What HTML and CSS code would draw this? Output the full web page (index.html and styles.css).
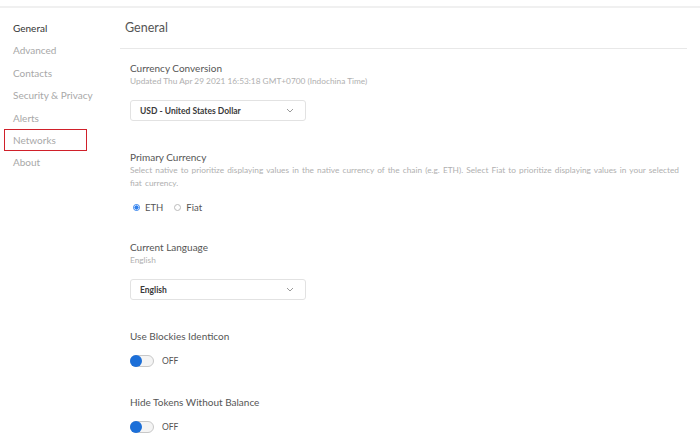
FILE: index.html
```html
<!DOCTYPE html>
<html>
<head>
<meta charset="utf-8">
<link rel="stylesheet" href="styles.css">
</head>
<body>
<div class="topbar"></div>
<div class="page">
  <nav class="sidebar">
    <div class="nav-item active">General</div>
    <div class="nav-item">Advanced</div>
    <div class="nav-item">Contacts</div>
    <div class="nav-item">Security &amp; Privacy</div>
    <div class="nav-item">Alerts</div>
    <div class="nav-item highlighted">Networks</div>
    <div class="nav-item">About</div>
  </nav>
  <main class="main">
    <div class="header">General</div>
    <div class="content">
      <section class="setting">
        <div class="title">Currency Conversion</div>
        <div class="desc">Updated Thu Apr 29 2021 16:53:18 GMT+0700 (Indochina Time)</div>
        <div class="select"><span>USD - United States Dollar</span><svg width="8" height="5" viewBox="0 0 8 5"><path d="M1 1l3 3 3-3" fill="none" stroke="#9a9a9a" stroke-width="1"/></svg></div>
      </section>
      <section class="setting radio-setting">
        <div class="title">Primary Currency</div>
        <div class="desc wide">Select native to prioritize displaying values in the native currency of the chain (e.g. ETH). Select Fiat to prioritize displaying values in your selected fiat currency.</div>
        <div class="radios">
          <span class="radio checked"></span><span class="rlabel">ETH</span>
          <span class="radio"></span><span class="rlabel">Fiat</span>
        </div>
      </section>
      <section class="setting">
        <div class="title">Current Language</div>
        <div class="desc">English</div>
        <div class="select"><span>English</span><svg width="8" height="5" viewBox="0 0 8 5"><path d="M1 1l3 3 3-3" fill="none" stroke="#9a9a9a" stroke-width="1"/></svg></div>
      </section>
      <section class="setting toggle-setting">
        <div class="title">Use Blockies Identicon</div>
        <div class="toggle-row"><span class="toggle"><span class="knob"></span></span><span class="tlabel">OFF</span></div>
      </section>
      <section class="setting last">
        <div class="title">Hide Tokens Without Balance</div>
        <div class="toggle-row"><span class="toggle"><span class="knob"></span></span><span class="tlabel">OFF</span></div>
      </section>
    </div>
  </main>
</div>
</body>
</html>
```
FILE: styles.css
```css
html, body { margin: 0; padding: 0; background: #fff; }
body {
  font-family: Lato, "Noto Sans", "Liberation Sans", sans-serif;
  color: #24292e;
  width: 700px;
  height: 435px;
  overflow: hidden;
}
.topbar {
  height: 6px;
  border-bottom: 2px solid #f0f0f0;
}
.page {
  display: flex;
  height: 427px;
  overflow: hidden;
}
.sidebar {
  width: 120px;
  flex: none;
  padding-top: 9px;
}
.nav-item {
  font-size: 10px;
  line-height: 22.4px;
  color: #a8a8a8;
  padding-left: 13px;
  position: relative;
}
.nav-item.active { color: #333; }
.nav-item.highlighted::after {
  content: "";
  position: absolute;
  left: 4px;
  top: 0;
  width: 81px;
  height: 20px;
  border: 1.5px solid #d0202a;
}
.main {
  flex: 1;
  padding-right: 13px;
}
.header {
  font-size: 12.5px;
  color: #555;
  padding: 12px 0 0 5px;
  height: 28px;
  border-bottom: 1px solid #e8e8e8;
}
.content {
  padding-left: 10px;
  padding-top: 12px;
}
.setting { margin-bottom: 29px; }
.setting.radio-setting { margin-bottom: 26px; }
.setting.toggle-setting { margin-bottom: 27px; }
.setting.last { margin-bottom: 0; }
.title {
  font-size: 10px;
  color: #555;
  line-height: 14px;
}
.desc {
  font-size: 8.3px;
  color: #b0b0b0;
  line-height: 13px;
}
.desc.wide {
  word-spacing: 1px;
}
.select {
  margin-top: 12px;
  width: 154px;
  height: 19px;
  border: 1px solid #e2e2e2;
  border-radius: 3px;
  display: flex;
  align-items: center;
  justify-content: space-between;
  padding: 0 11px 0 9px;
  font-size: 8.5px;
  font-weight: bold;
  color: #3a3a3a;
}
.radios {
  margin-top: 10px;
  height: 14px;
  display: flex;
  align-items: center;
  font-size: 9.5px;
  color: #555;
}
.radio {
  width: 7px;
  height: 7px;
  border-radius: 50%;
  border: 1px solid #bbb;
  margin: 0 5px 0 3px;
  box-sizing: border-box;
}
.radio.checked {
  border-color: #2f80ed;
  background: radial-gradient(circle, #2f80ed 0 55%, #fff 60%);
}
.rlabel { margin-right: 8px; }
.toggle-row {
  margin-top: 11px;
  height: 14px;
  display: flex;
  align-items: center;
}
.toggle {
  width: 24px;
  height: 12px;
  border-radius: 6px;
  border: 1px solid #c8c8c8;
  background: #f4f4f4;
  box-sizing: border-box;
  position: relative;
  display: inline-block;
}
.knob {
  position: absolute;
  left: -1px;
  top: -1px;
  width: 12px;
  height: 12px;
  border-radius: 50%;
  background: #1c6fd8;
}
.tlabel {
  margin-left: 8px;
  font-size: 8.5px;
  color: #555;
}
```
